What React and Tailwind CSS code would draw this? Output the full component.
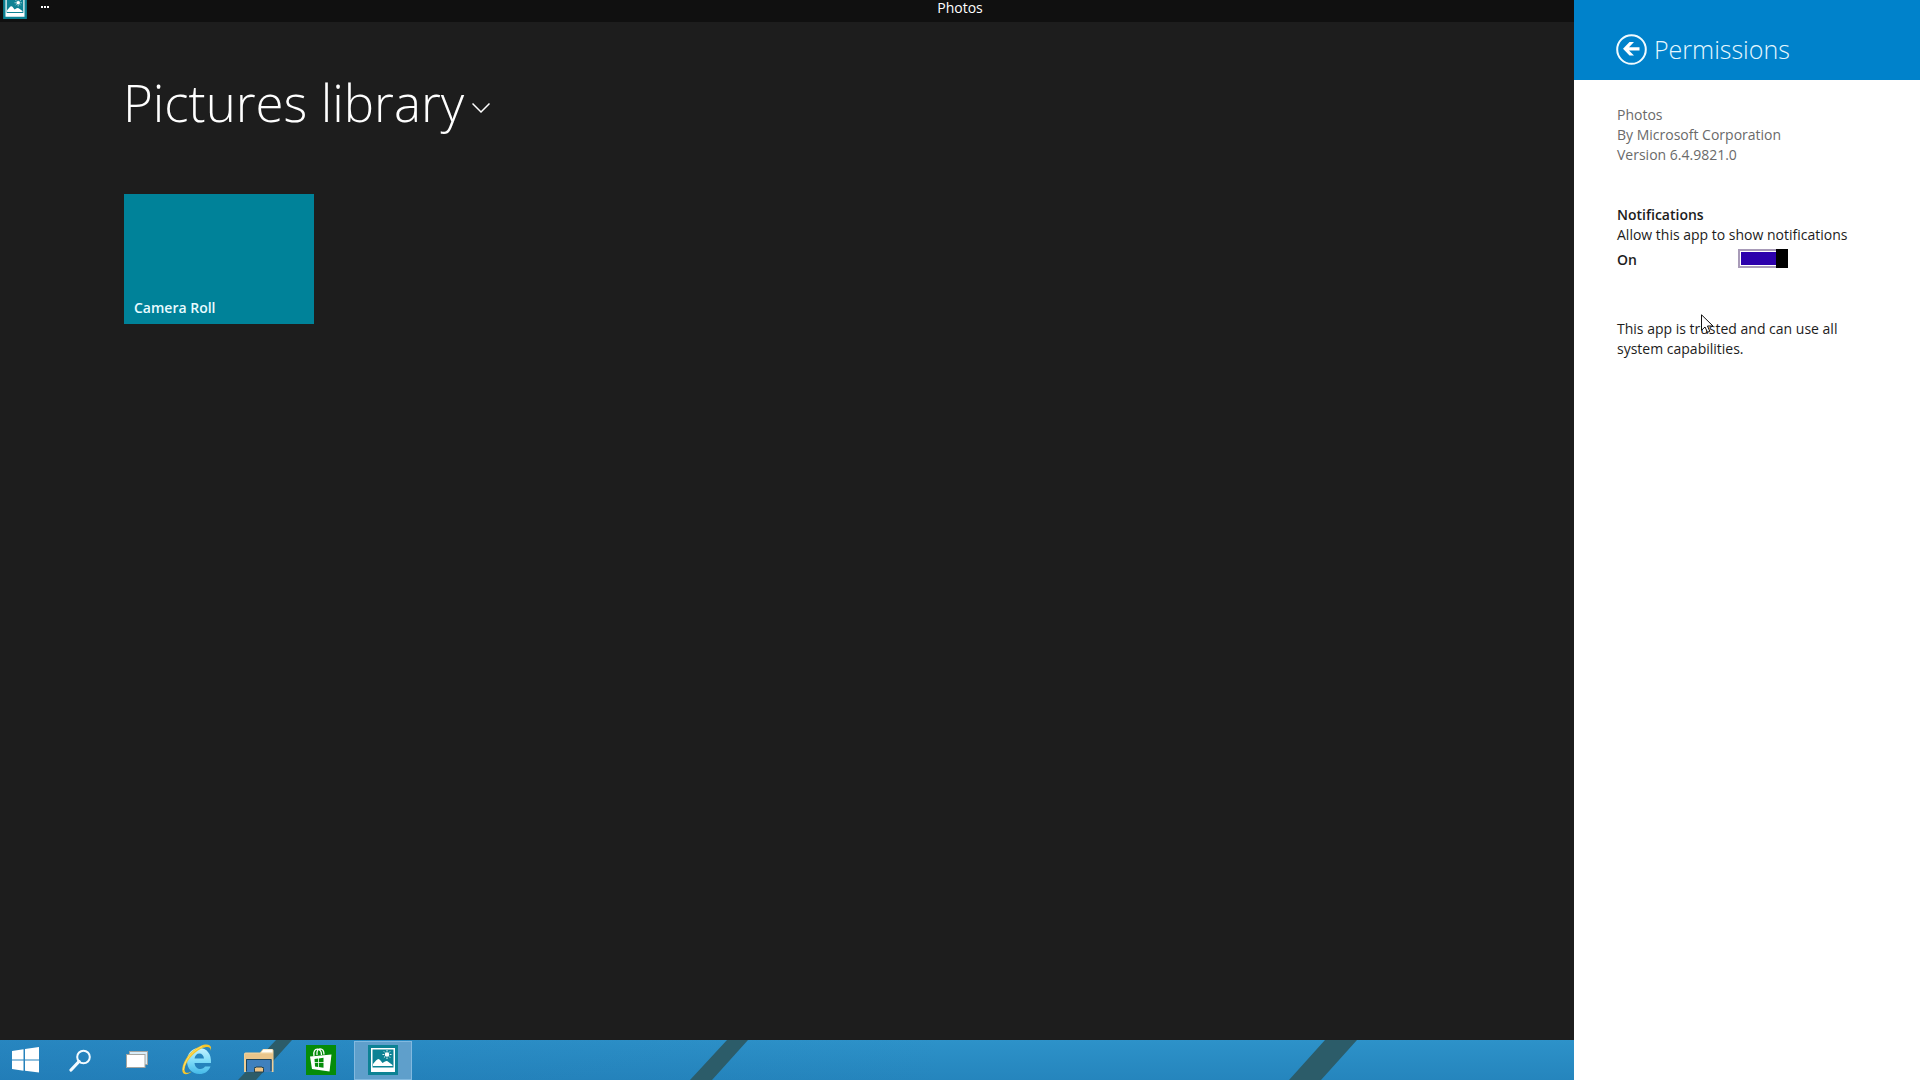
import { useState } from "react";

function PhotosGlyph({ className, viewBox }) {
  return (
    <svg className={className} viewBox={viewBox} aria-hidden="true">
      <rect width="30" height="30" fill="#0d8294" />
      <path fillRule="evenodd" fill="#fff" d="M3 3H27V27H3ZM4.5 4.5V22.5H25.500V4.500Z" />
      <path fill="#fff" d="M5 21V19L8 15.500Q10.500 12.500 12.500 15.500L14.500 18L17 16.500Q19 15.500 20.500 17L24.500 20V21Z" />
      <circle cx="19" cy="9.500" r="2.300" fill="#fff" />
      <path stroke="#fff" strokeWidth="0.900" d="M19 5V6.500M19 12.500V14M14.500 9.500H16M22 9.500H23.500M15.900 6.400L17 7.500M21 11.500L22.100 12.600M15.900 12.600L17 11.500M21 7.500L22.100 6.400" />
    </svg>
  );
}

function StartIcon() {
  return (
    <svg className="h-[26px] w-[27px]" viewBox="0 0 27 26" fill="#fff" aria-hidden="true">
      <path d="M0 4L11.500 2.200V12.500H0ZM13 2L27 0V12.500H13ZM0 13.500H11.500V23.700L0 22ZM13 13.500H27V25.500L13 23.800Z" />
    </svg>
  );
}

function SearchIcon() {
  return (
    <svg className="h-[23px] w-[23px]" viewBox="0 0 23 23" fill="none" stroke="#f4fbff" aria-hidden="true">
      <circle cx="14.500" cy="8" r="6.300" strokeWidth="2" />
      <path d="M10 12.500L2 21" strokeWidth="3.200" strokeLinecap="round" />
    </svg>
  );
}

function TaskViewIcon() {
  return (
    <svg className="h-[18px] w-[23px]" viewBox="0 0 23 18" stroke="#a5a5a0" aria-hidden="true">
      <rect x="3.500" y="0.500" width="18" height="13" fill="#d8ecf8" />
      <rect x="0.500" y="3.500" width="18.500" height="13" fill="#fff" />
    </svg>
  );
}

function ExplorerIcon() {
  return (
    <svg className="h-8 w-[31px]" viewBox="0 0 31 32" aria-hidden="true">
      <defs>
        <linearGradient id="ieBlue" x1="0" y1="0" x2="0" y2="1">
          <stop offset="0" stopColor="#c4f2ff" />
          <stop offset="0.5" stopColor="#7fdcf8" />
          <stop offset="1" stopColor="#45b9e8" />
        </linearGradient>
      </defs>
      <path
        fill="url(#ieBlue)"
        fillRule="evenodd"
        d="M17 4C25 4 29.500 10 29 19H12.500C13 23 15.500 25 18.500 25C20.500 25 22 24 23 22.500H28.500C26.500 27.500 22.500 30 17.500 30C10 30 5 24.500 5 17C5 9.500 10 4 17 4ZM12.500 14.500H22C21.700 11.500 20 9.500 17.300 9.500C14.700 9.500 13 11.500 12.500 14.500Z"
      />
      <path
        fill="#f5c62c"
        d="M28.500 7C29.500 2.500 25 2 19.500 4.500C11 8.500 3.500 18 2.600 25C2.200 29 5 30 9.500 27.500C5 32 -0.500 31 0.300 24.500C1.200 16.500 9 6 18.500 2C25 -0.800 31 0.500 28.500 7Z"
      />
      <path fill="none" stroke="#ffe98a" strokeWidth="0.700" d="M1.400 26C2 17 10 6.500 20 2.600" />
    </svg>
  );
}

function FolderIcon() {
  return (
    <svg className="h-[25px] w-[30px]" viewBox="0 0 30 25" aria-hidden="true">
      <path fill="#efcf98" d="M0 6Q0 4.500 1.500 4.500H16L19 1H28Q29.500 1 29.500 2.500V24H27.500V11H2V24H0Z" />
      <path fill="#fffdf5" d="M19.500 1.500H28.500V4.500H17Z" />
      <path fill="#eac58a" d="M1 6H29V11H1Z" />
      <path fill="#3f80bd" d="M2.500 11.500H27.500V24H20V19H10V24H2.500Z" />
      <path fill="none" stroke="#1f4258" strokeWidth="1" d="M2.500 23V11.500H27V23" />
      <path fill="#f0c483" stroke="#24404f" strokeWidth="1" d="M10.500 24V20.500L12 19H18L19.500 20.500V24Z" />
    </svg>
  );
}

function StoreIcon() {
  return (
    <svg className="h-[30px] w-[30px]" viewBox="0 0 30 30" aria-hidden="true">
      <rect width="30" height="30" fill="#058c09" />
      <path fill="none" stroke="#fff" strokeWidth="1.300" d="M8 11C7 6.500 9 4 11.500 4.200C14 4.500 15.500 6.500 15.500 10M11 10C10.500 5.500 12 3.800 14 3.800C16.500 3.800 18 5.500 18 9.500" />
      <path fill="#fff" d="M4 11.500L25.500 9.500L23.500 26.500L6 24Z" />
      <path fill="#058c09" d="M8.500 14L12 13.500V17.200H8.700ZM12.800 13.400L17.500 12.800V17.200H12.800ZM8.800 18H12V22L9 21.600ZM12.800 18H17.500V22.800L12.800 22.100Z" />
    </svg>
  );
}

function BackIcon() {
  return (
    <svg className="h-[31px] w-[31px]" viewBox="0 0 31 31" aria-hidden="true">
      <circle cx="15.500" cy="15.500" r="14.300" fill="none" stroke="#f0fbff" strokeWidth="2" />
      <path fill="#fff" d="M7 14.800L13.500 8H18L13 13.200H23.500V16.500H13L18 21.500H13.500Z" />
    </svg>
  );
}

function Pointer() {
  return (
    <svg className="pointer-events-none absolute -top-[5px] left-[84px] h-[19px] w-[13px]" viewBox="0 0 13 19" aria-hidden="true">
      <path fill="#fff" stroke="#111" strokeWidth="1" d="M0.500 0.800V16.300L4 13L6.500 18.300L8.800 17.300L6.500 12H12Z" />
    </svg>
  );
}

function Taskbar() {
  return (
    <nav aria-label="Taskbar" className="relative col-start-1 row-start-3 overflow-hidden bg-linear-to-b from-[#2d92c9] to-[#2585bd]">
      <svg className="absolute inset-y-0 left-0 h-10 w-[1574px]" viewBox="0 0 1574 40" aria-hidden="true">
        <defs>
          <linearGradient id="shade" x1="0" y1="0" x2="1" y2="0">
            <stop offset="0" stopColor="#1d6fae" stopOpacity="0.35" />
            <stop offset="0.6" stopColor="#1d6fae" stopOpacity="0" />
          </linearGradient>
        </defs>
        <rect width="1574" height="40" fill="url(#shade)" />
        <path fill="#2c5c69" d="M276 0H292L256 40H238ZM727 0H748L712 40H690ZM1325 0H1357L1321 40H1289Z" />
      </svg>
      <div className="relative flex h-full items-center">
        <button aria-label="Start" className="flex h-full w-[50px] items-center justify-center"><StartIcon /></button>
        <button aria-label="Search" className="flex h-full w-[60px] items-center justify-center"><SearchIcon /></button>
        <button aria-label="Task view" className="flex h-full w-[54px] items-center justify-center"><TaskViewIcon /></button>
        <button aria-label="Internet Explorer" className="flex h-full w-[66px] items-center justify-center"><ExplorerIcon /></button>
        <button aria-label="File Explorer" className="flex h-full w-[58px] items-center justify-center"><FolderIcon /></button>
        <button aria-label="Store" className="flex h-full w-[66px] items-center justify-center"><StoreIcon /></button>
        <button aria-label="Photos" className="flex h-[39px] w-[58px] items-center justify-center border border-[#82b9df] bg-[#5f9fcb]">
          <PhotosGlyph className="h-[30px] w-[30px]" viewBox="0 0 30 30" />
        </button>
      </div>
    </nav>
  );
}

function PermissionsPanel() {
  const [on, setOn] = useState(true);
  return (
    <aside className="z-10 col-start-2 row-span-3 row-start-1 bg-white text-sm leading-5 text-[#1c1c1c]">
      <header className="flex h-20 items-center gap-[7px] bg-[#0082cb] pt-[18px] pl-[42px] text-[#e6f8ff]">
        <button aria-label="Back"><BackIcon /></button>
        <h2 className="text-[25px] leading-8 font-light">Permissions</h2>
      </header>
      <div className="pt-[25px] pr-12 pl-[43px]">
        <div className="text-[#6a6a6a]">
          <p>Photos</p>
          <p>By Microsoft Corporation</p>
          <p>Version 6.4.9821.0</p>
        </div>
        <section className="mt-10">
          <h3 className="font-semibold">Notifications</h3>
          <p id="notify" className="whitespace-nowrap">Allow this app to show notifications</p>
          <div className="mt-1 flex items-start">
            <span className="w-[121px] leading-[22px] font-semibold">{on ? "On" : "Off"}</span>
            <label className="flex h-[19px] w-[50px] border-2 border-[#a89bb8] bg-white p-px has-checked:border-r-0 has-checked:pr-0">
              <input type="checkbox" role="switch" aria-labelledby="notify" checked={on} onChange={() => setOn(!on)} className="peer sr-only" />
              <span className="flex-1 bg-[#a6a6a6] peer-checked:bg-[#2c00ac]" />
              <span className="-my-[3px] w-3 bg-black" />
            </label>
          </div>
        </section>
        <div className="relative mt-12">
          <p>This app is trusted and can use all system capabilities.</p>
          <Pointer />
        </div>
      </div>
    </aside>
  );
}

export default function App() {
  return (
    <div className="grid h-screen grid-cols-[1fr_346px] grid-rows-[22px_1fr_40px] overflow-hidden bg-[#1d1d1d] font-['Open_Sans','Noto_Sans',sans-serif]">
      <header className="col-span-2 col-start-1 row-start-1 grid grid-cols-[1fr_auto_1fr] bg-[#101010] text-white">
        <div className="flex gap-3.5 pl-[3px]">
          <PhotosGlyph className="h-[19px] w-6" viewBox="0 6 30 24" />
          <button aria-label="More" className="flex h-3.5 items-center gap-px">
            <span className="size-0.5 bg-white" />
            <span className="size-0.5 bg-white" />
            <span className="size-0.5 bg-white" />
          </button>
        </div>
        <h1 className="text-sm leading-4">Photos</h1>
      </header>
      <main className="col-start-1 row-start-2 pt-10 pl-[123px] text-white">
        <button className="flex items-center gap-2">
          <span className="text-[51px] leading-20 font-light">Pictures library</span>
          <svg className="mt-3 h-3 w-[18px]" viewBox="0 0 18 12" fill="none" stroke="#fff" strokeWidth="1.500" aria-hidden="true">
            <path d="M0.500 1.500L9 10L17.500 1.500" />
          </svg>
        </button>
        <button className="mt-[52px] ml-px flex h-[130px] w-[190px] items-end bg-[#008299] px-2.5 pb-1.5 text-sm leading-5 font-semibold text-[#e8fbff]">
          Camera Roll
        </button>
      </main>
      <Taskbar />
      <PermissionsPanel />
    </div>
  );
}
